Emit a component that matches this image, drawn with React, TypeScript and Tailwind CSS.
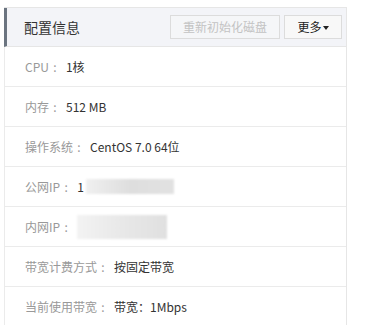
import React from 'react'

const rows: { label: string; value?: string; blur?: 'public' | 'private' }[] = [
  { label: 'CPU', value: '1核' },
  { label: '内存', value: '512 MB' },
  { label: '操作系统', value: 'CentOS 7.0 64位' },
  { label: '公网IP', blur: 'public' },
  { label: '内网IP', blur: 'private' },
  { label: '带宽计费方式', value: '按固定带宽' },
  { label: '当前使用带宽', value: '带宽：1Mbps' },
]

// Masked IP address, like the blurred patch in the screenshot
function Masked({ kind }: { kind: 'public' | 'private' }) {
  if (kind === 'public') {
    return (
      <span className="flex items-center">
        <span className="text-[#333]">1</span>
        <span className="ml-[2px] h-[15px] w-[88px] bg-gradient-to-r from-[#f0f0f0] via-[#dedede] to-[#e2e2e2] blur-[1px]" />
      </span>
    )
  }
  return (
    <span className="h-[24px] w-[90px] bg-gradient-to-r from-[#f3f3f3] via-[#e8e8e8] to-[#e0e0e0] blur-[1px]" />
  )
}

export default function App() {
  return (
    <div
      className="h-[325px] w-[369px] overflow-hidden bg-white pl-1 pt-[7px]"
      style={{ fontFamily: '"Noto Sans CJK SC", "Noto Sans", sans-serif' }}
    >
      <div className="w-[343px] border-r border-t border-[#e6e6e6]">
        {/* Header */}
        <div className="flex h-[39px] items-center border-b border-l-[3px] border-b-[#e6e6e6] border-l-[#6b7480] bg-[#f3f4f8] pl-[17px] pr-1">
          <span className="text-[14px] text-[#333]">配置信息</span>
          <button
            type="button"
            disabled
            className="ml-auto h-6 w-[110px] border border-[#dcdcdc] bg-[#f5f6f8] text-[12px] text-[#c3c3c3]"
          >
            重新初始化磁盘
          </button>
          <button
            type="button"
            className="ml-1 flex h-6 w-[58px] items-center justify-center border border-[#dcdcdc] bg-[#f8f8f8] text-[12px] text-[#222]"
          >
            更多
            <span className="ml-[1px] mt-[1px] h-0 w-0 border-x-[3.5px] border-t-[4px] border-x-transparent border-t-[#222]" />
          </button>
        </div>

        {/* Rows */}
        {rows.map((r) => (
          <div
            key={r.label}
            className="flex h-10 items-center border-b border-l border-[#ebebeb] pl-5 text-[12px]"
          >
            <span className="text-[#999]">{r.label}</span>
            <span className="w-3 text-center text-[#999]">:</span>
            <span className="ml-[5px] flex items-center text-[#333]">
              {r.blur ? <Masked kind={r.blur} /> : r.value}
            </span>
          </div>
        ))}
      </div>
    </div>
  )
}
